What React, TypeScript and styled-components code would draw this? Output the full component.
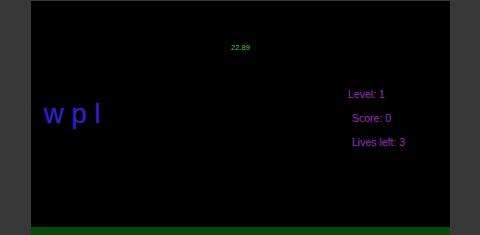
import React from "react";
import styled, { createGlobalStyle } from "styled-components";

const Global = createGlobalStyle`
  html, body { margin: 0; padding: 0; background: #383838; }
  #root { width: 480px; height: 235px; }
`;

const Page = styled.div`
  display: flex;
  width: 480px;
  height: 235px;
  background: #383838;
  font-family: "Liberation Sans", Arial, sans-serif;
`;

const Side = styled.div<{ $w: number }>`
  width: ${(p) => p.$w}px;
  flex: none;
  background: #383838;
`;

const Stage = styled.div`
  flex: 1;
  display: flex;
  flex-direction: column;
  border-top: 1px solid #3a3a3a;
  background: #000;
`;

const Canvas = styled.div`
  position: relative;
  flex: 1;
  background: #000;
`;

const Ground = styled.div`
  height: 8px;
  background: #0b480b;
`;

const Timer = styled.div`
  position: absolute;
  left: 200px;
  top: 42px;
  font-size: 7.6px;
  color: #3fcf3f;
`;

const Word = styled.div`
  position: absolute;
  left: 13px;
  top: 97px;
  font-size: 27.5px;
  color: #2c20c8;
  white-space: pre;
  -webkit-text-stroke: 0.4px #2c20c8;
`;

const Hud = styled.div`
  position: absolute;
  left: 317px;
  top: 87px;
  display: flex;
  flex-direction: column;
  gap: 11.5px;
  font-size: 10.5px;
  color: #a02cc2;
`;

const HudLine = styled.div<{ $indent?: number }>`
  margin-left: ${(p) => p.$indent ?? 0}px;
  line-height: 12.5px;
  white-space: pre;
`;

export default function App() {
  return (
    <>
      <Global />
      <Page>
        <Side $w={31} />
        <Stage>
          <Canvas>
            <Timer>22.89</Timer>
            <Word>w p l</Word>
            <Hud>
              <HudLine>Level: 1</HudLine>
              <HudLine $indent={4}>Score: 0</HudLine>
              <HudLine $indent={4}>Lives left: 3</HudLine>
            </Hud>
          </Canvas>
          <Ground />
        </Stage>
        <Side $w={30} />
      </Page>
    </>
  );
}
